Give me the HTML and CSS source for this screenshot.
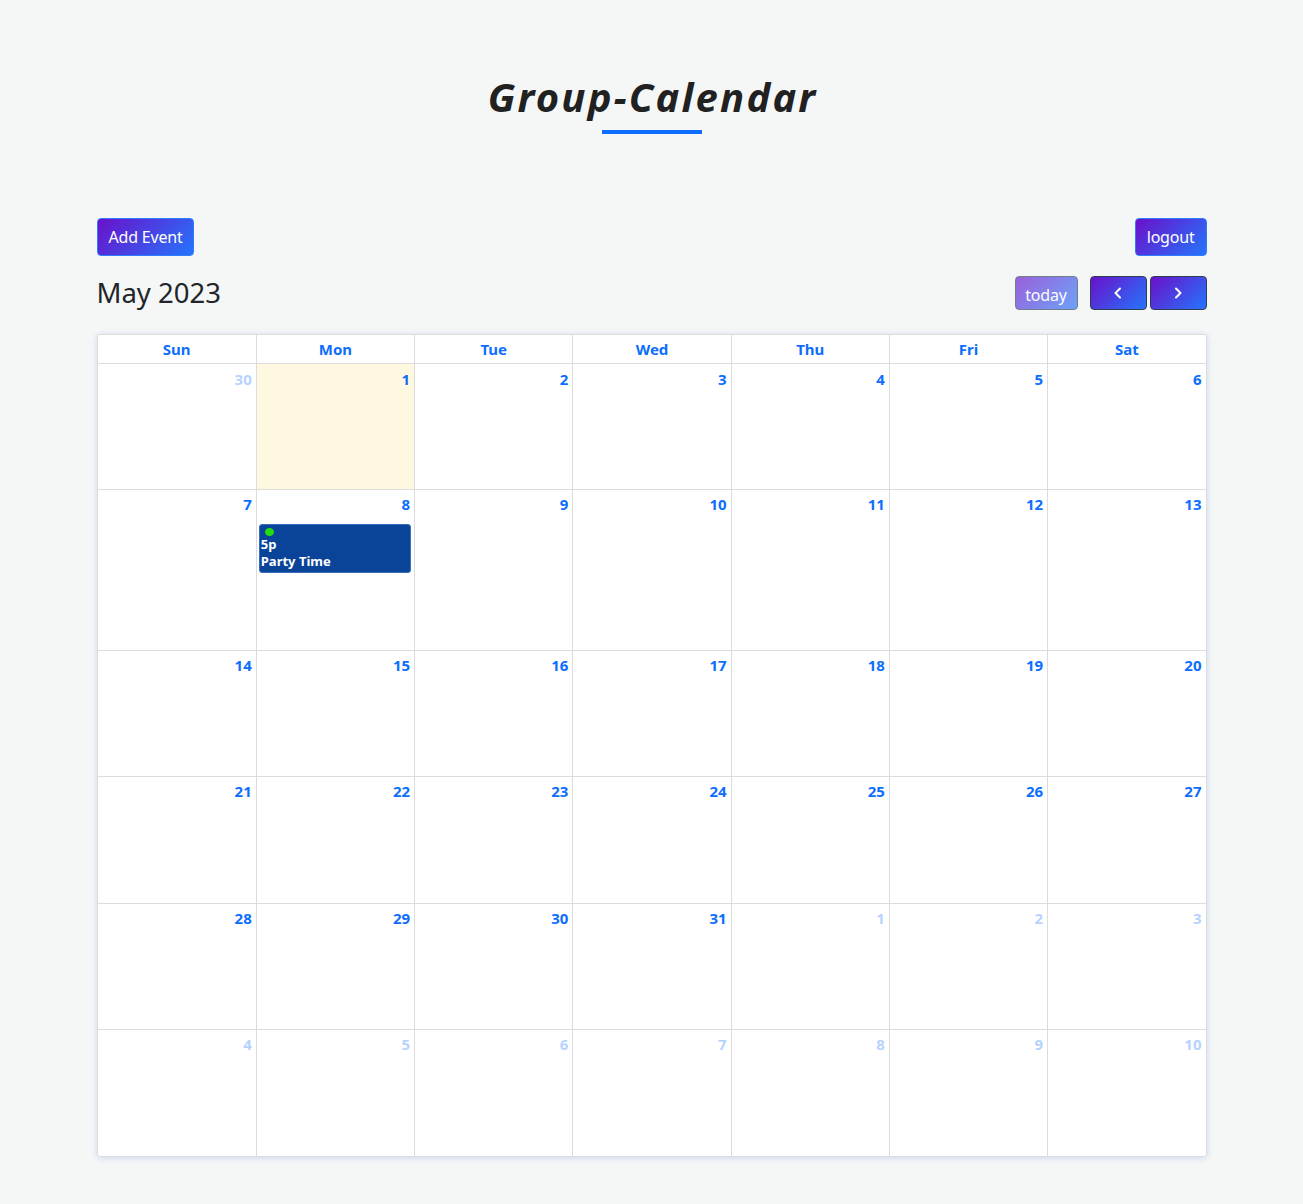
FILE: index.html
```html
<!DOCTYPE html>
<html lang="en">
<head>
<meta charset="utf-8">
<title>Group-Calendar</title>
<link rel="stylesheet" href="styles.css">
</head>
<body>
<div class="container">
  <header class="page-head">
    <h1 class="page-title">Group-Calendar</h1>
    <div class="title-bar"></div>
  </header>

  <div class="actions">
    <button class="btn btn-grad">Add Event</button>
    <button class="btn btn-grad">logout</button>
  </div>

  <div class="toolbar">
    <h2 class="toolbar-title">May 2023</h2>
    <div class="toolbar-right">
      <button class="btn btn-grad btn-fc btn-today" disabled>today</button>
      <div class="btn-group">
        <button class="btn btn-grad btn-fc btn-nav" aria-label="prev">
          <svg width="14" height="14" viewBox="0 0 14 14"><path d="M9 2.5 L4.5 7 L9 11.5" fill="none" stroke="#fff" stroke-width="2" stroke-linecap="round" stroke-linejoin="round"/></svg>
        </button>
        <button class="btn btn-grad btn-fc btn-nav" aria-label="next">
          <svg width="14" height="14" viewBox="0 0 14 14"><path d="M5 2.5 L9.5 7 L5 11.5" fill="none" stroke="#fff" stroke-width="2" stroke-linecap="round" stroke-linejoin="round"/></svg>
        </button>
      </div>
    </div>
  </div>

  <div class="cal">
    <div class="cal-head">
      <div class="hcell">Sun</div><div class="hcell">Mon</div><div class="hcell">Tue</div><div class="hcell">Wed</div><div class="hcell">Thu</div><div class="hcell">Fri</div><div class="hcell">Sat</div>
    </div>
    <div class="cal-body">
      <div class="day other"><span class="num">30</span></div>
      <div class="day today"><span class="num">1</span></div>
      <div class="day"><span class="num">2</span></div>
      <div class="day"><span class="num">3</span></div>
      <div class="day"><span class="num">4</span></div>
      <div class="day"><span class="num">5</span></div>
      <div class="day"><span class="num">6</span></div>

      <div class="day"><span class="num">7</span></div>
      <div class="day"><span class="num">8</span>
        <div class="event">
          <span class="dot"></span>
          <span class="ev-time">5p</span>
          <span class="ev-title">Party Time</span>
        </div>
      </div>
      <div class="day"><span class="num">9</span></div>
      <div class="day"><span class="num">10</span></div>
      <div class="day"><span class="num">11</span></div>
      <div class="day"><span class="num">12</span></div>
      <div class="day"><span class="num">13</span></div>

      <div class="day"><span class="num">14</span></div>
      <div class="day"><span class="num">15</span></div>
      <div class="day"><span class="num">16</span></div>
      <div class="day"><span class="num">17</span></div>
      <div class="day"><span class="num">18</span></div>
      <div class="day"><span class="num">19</span></div>
      <div class="day"><span class="num">20</span></div>

      <div class="day"><span class="num">21</span></div>
      <div class="day"><span class="num">22</span></div>
      <div class="day"><span class="num">23</span></div>
      <div class="day"><span class="num">24</span></div>
      <div class="day"><span class="num">25</span></div>
      <div class="day"><span class="num">26</span></div>
      <div class="day"><span class="num">27</span></div>

      <div class="day"><span class="num">28</span></div>
      <div class="day"><span class="num">29</span></div>
      <div class="day"><span class="num">30</span></div>
      <div class="day"><span class="num">31</span></div>
      <div class="day other"><span class="num">1</span></div>
      <div class="day other"><span class="num">2</span></div>
      <div class="day other"><span class="num">3</span></div>

      <div class="day other"><span class="num">4</span></div>
      <div class="day other"><span class="num">5</span></div>
      <div class="day other"><span class="num">6</span></div>
      <div class="day other"><span class="num">7</span></div>
      <div class="day other"><span class="num">8</span></div>
      <div class="day other"><span class="num">9</span></div>
      <div class="day other"><span class="num">10</span></div>
    </div>
  </div>
</div>
</body>
</html>
```

FILE: styles.css
```css
* { box-sizing: border-box; }

html, body {
  margin: 0;
  padding: 0;
}

body {
  background: #f5f7f7;
  font-family: "Noto Sans", "Open Sans", sans-serif;
  color: #212529;
  font-size: 16px;
}

.container {
  width: 1110px;
  margin: 0 auto;
  padding-bottom: 48px;
}

.page-head {
  display: flex;
  flex-direction: column;
  align-items: center;
  padding-top: 70px;
}

.page-title {
  margin: 0 0 0 2px;
  font-size: 40px;
  font-style: italic;
  font-weight: 700;
  letter-spacing: 2.2px;
  line-height: 54px;
  color: #212121;
}

.title-bar {
  width: 100px;
  height: 4px;
  background: #0d6efd;
  margin-top: 6px;
}

.actions {
  display: flex;
  justify-content: space-between;
  margin-top: 84px;
}

.btn {
  font-family: inherit;
  font-size: 16px;
  line-height: 24px;
  color: #fff;
  border-radius: 4px;
  cursor: pointer;
}

.btn-grad {
  background: linear-gradient(135deg, #6a11cb 0%, #2575fc 100%);
  border: 1px solid #2f7cff;
  padding: 6px 11px;
  height: 38px;
  letter-spacing: -0.2px;
}

.toolbar {
  display: flex;
  justify-content: space-between;
  align-items: center;
  margin-top: 20px;
  margin-bottom: 24px;
  height: 34px;
}

.toolbar-title {
  margin: 0;
  font-size: 27.5px;
  font-weight: 400;
  line-height: 34px;
  color: #212529;
}

.toolbar-right {
  display: flex;
  align-items: center;
  gap: 12px;
}

.btn-fc {
  height: 34px;
  border: 1px solid #2c3e50;
  padding: 4px 10px;
  display: flex;
  align-items: center;
  justify-content: center;
}

.btn-today {
  opacity: 0.65;
  width: 63px;
  padding-top: 8px;
  cursor: default;
}

.btn-group {
  display: flex;
  gap: 3px;
}

.btn-nav {
  width: 57px;
}

.cal {
  background: #fff;
  border: 1px solid #dcdcdc;
  border-radius: 3px;
  box-shadow: 0 1px 6px rgba(40, 110, 210, 0.22);
}

.cal-head {
  display: grid;
  grid-template-columns: repeat(7, 1fr);
  border-bottom: 1px solid #dcdcdc;
}

.hcell {
  height: 28px;
  display: flex;
  align-items: center;
  justify-content: center;
  font-weight: 700;
  font-size: 15px;
  color: #0d6efd;
  border-left: 1px solid #dcdcdc;
}

.hcell:first-child { border-left: none; }

.cal-body {
  display: grid;
  grid-template-columns: repeat(7, 1fr);
  grid-template-rows: 125px 161px 126px 127px 126px 127px;
}

.day {
  border-left: 1px solid #dcdcdc;
  border-top: 1px solid #dcdcdc;
  display: flex;
  flex-direction: column;
  align-items: stretch;
  padding: 4px 4px 0 2px;
}

.day:nth-child(7n + 1) { border-left: none; }
.day:nth-child(-n + 7) { border-top: none; padding-top: 5px; }

.day.today { background: #fff8e1; }

.num {
  align-self: flex-end;
  font-weight: 700;
  font-size: 15px;
  line-height: 20px;
  color: #0d6efd;
}

.day.other .num { color: #0d6efd; opacity: 0.3; }

.event {
  margin-top: 10px;
  margin-left: 0;
  margin-right: -1px;
  background: #0a4499;
  border: 1px solid #3a6fbf;
  border-radius: 3px;
  padding: 2px 2px 2px 1px;
  display: flex;
  flex-direction: column;
  align-items: flex-start;
  color: #fff;
  font-weight: 700;
  font-size: 13px;
  line-height: 17px;
  height: 49px;
}

.dot {
  width: 9px;
  height: 9px;
  border-radius: 50%;
  background: #22dd11;
  margin: 1px 0 0 4px;
}

.ev-time,
.ev-title {
  display: block;
}
```
